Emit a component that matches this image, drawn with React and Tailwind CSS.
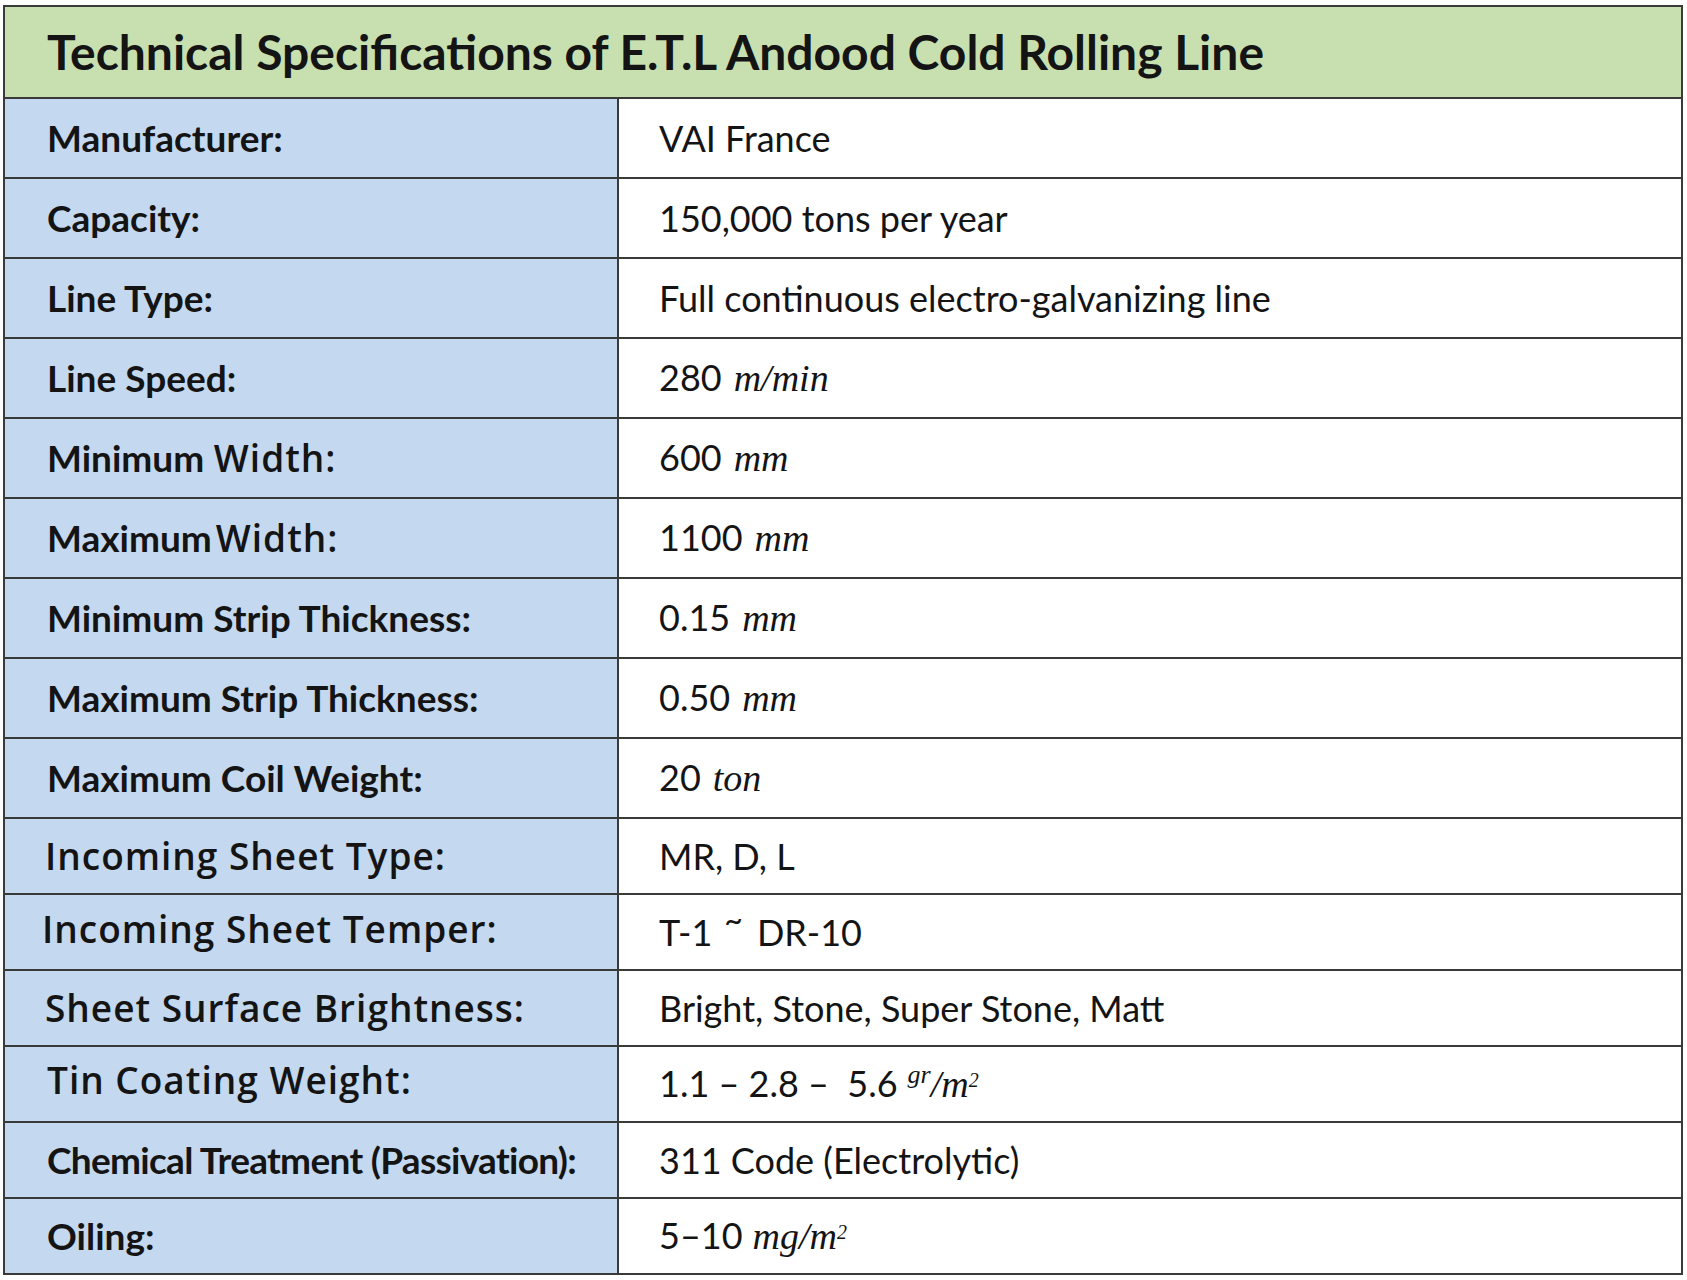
const calibri = "font-['Lato','Liberation_Sans',sans-serif] font-bold";
const wide = "font-['Open_Sans','Noto_Sans',sans-serif] font-semibold tracking-[1px]";
const serifIt = "font-['Liberation_Serif','DejaVu_Serif',serif] italic";

const Unit = ({ children }) => <span className={`${serifIt} ml-[12px] text-[38px]`}>{children}</span>;

const rows = [
  { label: <span className={calibri}>Manufacturer:</span>, value: 'VAI France', tall: true },
  { label: <span className={calibri}>Capacity:</span>, value: '150,000 tons per year', tall: true },
  { label: <span className={calibri}>Line Type:</span>, value: 'Full continuous electro-galvanizing line', tall: true },
  { label: <span className={calibri}>Line Speed:</span>, value: <>280<Unit>m/min</Unit></>, tall: true },
  {
    label: (
      <>
        <span className={calibri}>Minimum</span> <span className={wide}>Width:</span>
      </>
    ),
    value: <>600<Unit>mm</Unit></>,
    tall: true,
  },
  {
    label: (
      <>
        <span className={calibri}>Maximum</span>
        <span className={`${wide} ml-[4px]`}>Width:</span>
      </>
    ),
    value: <>1100<Unit>mm</Unit></>,
    tall: true,
  },
  { label: <span className={calibri}>Minimum Strip Thickness:</span>, value: <>0.15<Unit>mm</Unit></>, tall: true },
  { label: <span className={calibri}>Maximum Strip Thickness:</span>, value: <>0.50<Unit>mm</Unit></>, tall: true },
  { label: <span className={calibri}>Maximum Coil Weight:</span>, value: <>20<Unit>ton</Unit></>, tall: true },
  { label: <span className={`${wide} -ml-[2px]`}>Incoming Sheet Type:</span>, value: 'MR, D, L' },
  {
    label: <span className={`${wide} -ml-[5px] -mt-[6px] block`}>Incoming Sheet Temper:</span>,
    value: (
      <>
        T-1<span className="relative -top-[14px] ml-[12px] mr-[14px] text-[32px]">~</span>DR-10
      </>
    ),
  },
  { label: <span className={`${wide} -ml-[2px]`}>Sheet Surface Brightness:</span>, value: 'Bright, Stone, Super Stone, Matt' },
  {
    label: <span className={`${wide} -mt-[8px] block`}>Tin Coating Weight:</span>,
    value: (
      <>
        1.1 – 2.8 – &nbsp;5.6
        <span className={`${serifIt} ml-[10px] text-[38px]`}>
          <sup className="text-[26px] -top-[14px]">gr</sup>/m<sup className="text-[20px]">2</sup>
        </span>
      </>
    ),
  },
  {
    label: <span className={`${calibri} tracking-[-0.7px]`}>Chemical Treatment (Passivation):</span>,
    value: '311 Code (Electrolytic)',
  },
  {
    label: <span className={calibri}>Oiling:</span>,
    value: (
      <>
        5–10
        <span className={`${serifIt} ml-[10px] text-[38px]`}>
          mg/m<sup className="text-[20px]">2</sup>
        </span>
      </>
    ),
  },
];

export default function App() {
  return (
    <div className="w-[1687px] h-[1280px] bg-white pt-[5px] pl-[3px]">
      <div className="w-[1680px] border-2 border-[#3a3a3a] text-[#141414]">
        <div className={`h-[90px] bg-[#c8e0b0] flex items-center pl-[42px] text-[48px] ${calibri}`}>
          Technical Specifications of E.T.L Andood Cold Rolling Line
        </div>
        {rows.map((r, i) => (
          <div
            key={i}
            className={`grid grid-cols-[614px_1fr] border-t-2 border-[#3a3a3a] ${r.tall ? 'h-[80px]' : 'h-[76px]'}`}
          >
            <div className="bg-[#c4d9ef] border-r-2 border-[#3a3a3a] flex items-center pl-[42px] text-[37px]">
              <div>{r.label}</div>
            </div>
            <div className="bg-white flex items-center pl-[40px] text-[36px] font-['Lato','Liberation_Sans',sans-serif]">
              <div>{r.value}</div>
            </div>
          </div>
        ))}
      </div>
    </div>
  );
}
